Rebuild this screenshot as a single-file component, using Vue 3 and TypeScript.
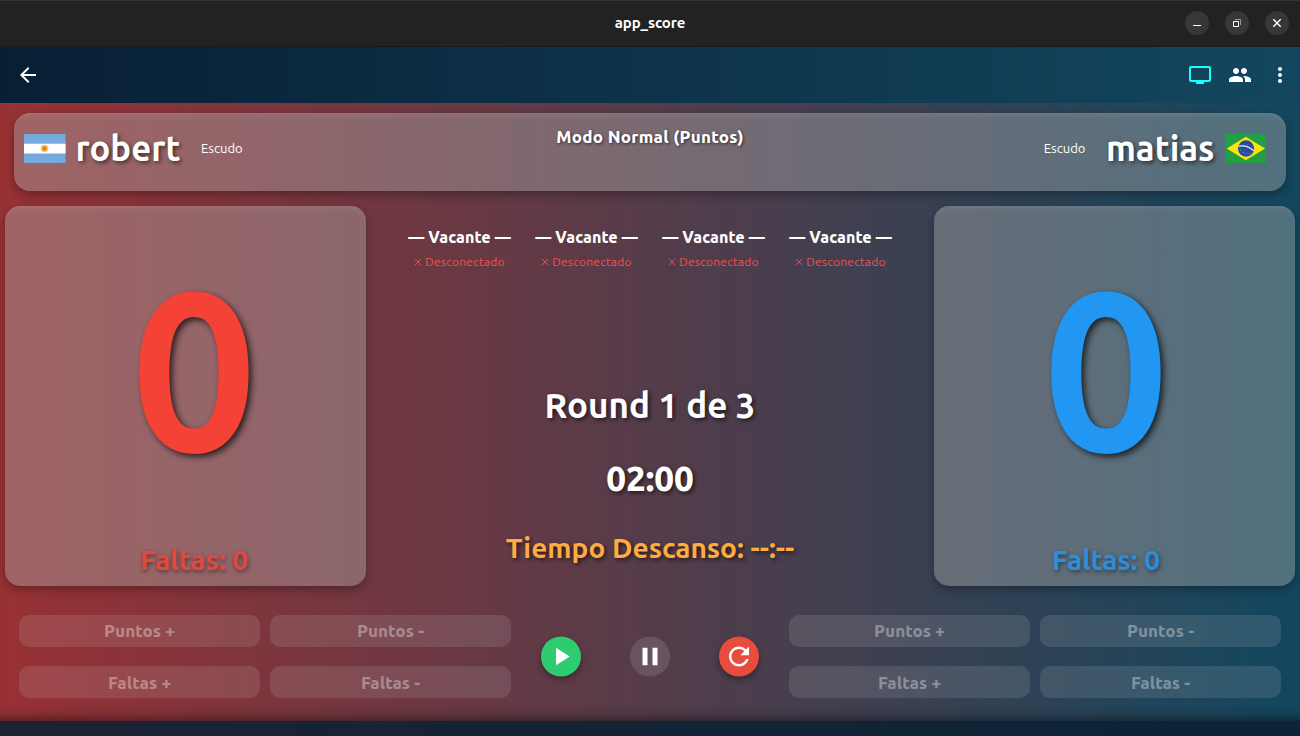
<script setup lang="ts">
interface Side {
  name: string
  score: number
  fouls: number
}

const left: Side = { name: 'robert', score: 0, fouls: 0 }
const right: Side = { name: 'matias', score: 0, fouls: 0 }
const judges: string[] = ['Vacante', 'Vacante', 'Vacante', 'Vacante']
const actions: string[] = ['Puntos +', 'Puntos -', 'Faltas +', 'Faltas -']
</script>

<template>
  <div class="window">
    <header class="titlebar">
      <span></span>
      <span class="app-title">app_score</span>
      <div class="controls">
        <span class="control"><svg viewBox="0 0 24 24"><path d="M8 14.5h8" stroke="#fff" /></svg></span>
        <span class="control">
          <svg viewBox="0 0 24 24" fill="none">
            <path d="M10 8.5h5.5v5.5" stroke="#999" />
            <path d="M8.5 10.5h5v5h-5z" stroke="#fff" />
          </svg>
        </span>
        <span class="control"><svg viewBox="0 0 24 24"><path d="M8.3 8.3l7.4 7.4M15.7 8.3l-7.4 7.4" stroke="#fff" stroke-width="1.4" /></svg></span>
      </div>
    </header>

    <nav class="appbar">
      <svg class="icon" viewBox="0 0 24 24"><path d="M20 11H7.83l5.59-5.59L12 4l-8 8 8 8 1.41-1.41L7.83 13H20v-2z" /></svg>
      <div class="appbar-actions">
        <svg class="icon cast" viewBox="0 0 24 24"><path d="M21 3H3c-1.1 0-2 .9-2 2v12c0 1.1.9 2 2 2h5v2h8v-2h5c1.1 0 2-.9 2-2V5c0-1.1-.9-2-2-2zm0 14H3V5h18v12z" /></svg>
        <svg class="icon" viewBox="0 0 24 24"><path d="M16 11c1.66 0 2.99-1.34 2.99-3S17.66 5 16 5s-3 1.34-3 3 1.34 3 3 3zm-8 0c1.66 0 2.99-1.34 2.99-3S9.66 5 8 5 5 6.34 5 8s1.34 3 3 3zm0 2c-2.33 0-7 1.17-7 3.5V19h14v-2.5c0-2.33-4.67-3.5-7-3.5zm8 0c-.29 0-.62.02-.97.05 1.16.84 1.97 1.97 1.97 3.45V19h6v-2.5c0-2.33-4.67-3.5-7-3.5z" /></svg>
        <svg class="icon" viewBox="0 0 24 24"><path d="M12 8c1.1 0 2-.9 2-2s-.9-2-2-2-2 .9-2 2 .9 2 2 2zm0 2c-1.1 0-2 .9-2 2s.9 2 2 2 2-.9 2-2-.9-2-2-2zm0 6c-1.1 0-2 .9-2 2s.9 2 2 2 2-.9 2-2-.9-2-2-2z" /></svg>
      </div>
    </nav>

    <main class="arena">
      <section class="players glass">
        <div class="player">
          <svg class="flag" viewBox="0 0 42 29" preserveAspectRatio="none">
            <rect width="42" height="29" fill="#75aadf" />
            <rect y="9.7" width="42" height="9.8" fill="#fff" />
            <circle cx="20.8" cy="14.5" r="4" fill="#e8b45a" opacity=".45" />
            <circle cx="20.8" cy="14.5" r="2.9" fill="#e3a02c" />
            <circle cx="20.8" cy="14.5" r="1.3" fill="#c9820f" />
          </svg>
          <span class="name robert">{{ left.name }}</span>
          <span class="crest">Escudo</span>
        </div>
        <h1 class="mode">Modo Normal (Puntos)</h1>
        <div class="player end">
          <span class="crest">Escudo</span>
          <span class="name matias">{{ right.name }}</span>
          <svg class="flag" viewBox="0 0 42 29" preserveAspectRatio="none">
            <rect width="42" height="29" fill="#229e45" />
            <path d="M1.7 14.5L21 2.8l19.6 11.7L21 26.2z" fill="#f8e509" />
            <circle cx="21.3" cy="14.5" r="8.2" fill="#2b49a3" />
            <path d="M13.6 12.2c5.5-1 11.5.8 15.5 4.6" fill="none" stroke="#dff0ee" stroke-width="1.3" />
            <g fill="#a9b8df">
              <circle cx="16" cy="16" r=".5" />
              <circle cx="18.5" cy="18.5" r=".5" />
              <circle cx="22" cy="19" r=".5" />
              <circle cx="25" cy="19.5" r=".5" />
              <circle cx="20" cy="16" r=".4" />
              <circle cx="23" cy="11" r=".4" />
            </g>
          </svg>
        </div>
      </section>

      <section class="board">
        <article class="card glass red">
          <span class="score">{{ left.score }}</span>
          <span class="fouls">Faltas: {{ left.fouls }}</span>
        </article>

        <div class="center">
          <ul class="judges">
            <li v-for="(judge, i) in judges" :key="i">
              <span class="judge">— {{ judge }} —</span>
              <span class="status">
                <svg viewBox="0 0 8 8"><path d="M1 1l6 6M7 1l-6 6" /></svg>
                <span>Desconectado</span>
              </span>
            </li>
          </ul>
          <p class="round">Round 1 de 3</p>
          <p class="clock">02:00</p>
          <p class="rest">Tiempo Descanso: --:--</p>
        </div>

        <article class="card glass blue">
          <span class="score">{{ right.score }}</span>
          <span class="fouls">Faltas: {{ right.fouls }}</span>
        </article>
      </section>

      <section class="panel">
        <div class="buttons">
          <button v-for="a in actions" :key="a" disabled>{{ a }}</button>
        </div>
        <div class="transport">
          <span class="round-btn play"><svg viewBox="0 0 24 24"><path d="M8 5v14l11-7z" /></svg></span>
          <span class="round-btn pause"><svg viewBox="0 0 24 24"><path d="M6 19h4V5H6v14zm8-14v14h4V5h-4z" /></svg></span>
          <span class="round-btn reset"><svg viewBox="0 0 24 24"><path d="M17.65 6.35C16.2 4.9 14.21 4 12 4c-4.42 0-7.99 3.58-7.99 8s3.57 8 7.99 8c3.73 0 6.84-2.55 7.73-6h-2.08c-.82 2.33-3.04 4-5.65 4-3.31 0-6-2.69-6-6s2.69-6 6-6c1.66 0 3.14.69 4.22 1.78L13 11h7V4l-2.35 2.35z" /></svg></span>
        </div>
        <div class="buttons">
          <button v-for="a in actions" :key="a" disabled>{{ a }}</button>
        </div>
      </section>
    </main>

    <footer class="bottombar"></footer>
  </div>
</template>

<style>
html,
body {
  margin: 0;
  overflow: hidden;
}
</style>

<style scoped>
.window {
  display: flex;
  flex-direction: column;
  width: 1300px;
  height: 736px;
  overflow: hidden;
  font-family: Ubuntu, "Noto Sans", "Open Sans", sans-serif;
  color: #fff;
  white-space: nowrap;
}
.titlebar {
  display: grid;
  grid-template-columns: 1fr auto 1fr;
  align-items: center;
  box-sizing: border-box;
  height: 47px;
  padding: 0 11px 1px;
  background: #222;
  border-top: 1px solid #333;
  border-bottom: 1px solid #1a1a1a;
}
.app-title {
  font-size: 15px;
  line-height: 20px;
  font-weight: 600;
  letter-spacing: -0.1px;
}
.controls {
  display: flex;
  justify-content: flex-end;
  gap: 16px;
}
.control {
  width: 24px;
  height: 24px;
  border-radius: 50%;
  background: #373737;
}
.control svg {
  display: block;
  width: 24px;
  height: 24px;
}
.appbar {
  display: flex;
  align-items: center;
  justify-content: space-between;
  box-sizing: border-box;
  height: 56px;
  padding: 0 8px 0 16px;
  background: linear-gradient(90deg, #081f34, #13475f);
}
.appbar-actions {
  display: flex;
  gap: 16px;
}
.icon {
  display: block;
  width: 24px;
  height: 24px;
  fill: #fff;
}
.cast {
  fill: #18ffff;
}
.arena {
  display: flex;
  flex-direction: column;
  flex: none;
  height: 618px;
  background: linear-gradient(90deg, #983134, #12475f);
}
.glass {
  background: rgba(176, 176, 176, 0.4);
  box-shadow: 0 4px 10px rgba(0, 0, 0, 0.3), inset 0 7px 7px -5px rgba(255, 255, 255, 0.1);
}
.players {
  display: grid;
  grid-template-columns: 1fr auto 1fr;
  box-sizing: border-box;
  height: 78px;
  margin: 10px 14px 0;
  padding: 0 20px 0 10px;
  border-radius: 16px;
}
.player {
  display: flex;
  align-items: center;
  height: 70px;
}
.end {
  justify-content: flex-end;
}
.flag {
  width: 41.5px;
  height: 29px;
}
.name {
  padding-top: 2px;
  font-size: 34.7px;
  line-height: 48px;
  font-weight: 700;
  text-shadow: 2px 2px 4px rgba(0, 0, 0, 0.55);
}
.robert {
  margin: 0 20.7px 0 10px;
}
.matias {
  margin: 0 10px 0 20.5px;
}
.crest {
  font-size: 13px;
}
.mode {
  margin: 12px 0 0 10px;
  font-size: 17px;
  line-height: 24px;
  font-weight: 800;
  letter-spacing: 0.25px;
  text-shadow: 1px 1px 3px rgba(0, 0, 0, 0.6);
}
.board {
  display: grid;
  grid-template-columns: 361px 1fr 361px;
  height: 380px;
  margin: 15px 5px 0;
}
.card {
  display: flex;
  flex-direction: column;
  align-items: center;
  box-sizing: border-box;
  border-radius: 15px;
}
.red {
  padding-left: 17px;
  color: #f44336;
}
.blue {
  padding-right: 17px;
  color: #2196f3;
}
.score {
  margin-top: 12px;
  font-size: 224px;
  line-height: 300px;
  font-weight: 700;
  text-shadow: 3px 3px 6px rgba(0, 0, 0, 0.7);
}
.fouls {
  margin-top: 22px;
  font-size: 28px;
  line-height: 40px;
  font-weight: 700;
  opacity: 0.8;
  text-shadow: 1px 2px 4px rgba(0, 0, 0, 0.55);
}
.center {
  display: flex;
  flex-direction: column;
  align-items: center;
}
.judges {
  display: grid;
  grid-template-columns: repeat(4, 127px);
  height: 64px;
  margin: 20px 0 0;
  padding: 0;
  list-style: none;
}
.judges li {
  display: flex;
  flex-direction: column;
  align-items: center;
}
.judge {
  font-size: 16px;
  line-height: 22px;
  font-weight: 800;
  letter-spacing: 0.12px;
}
.status {
  display: flex;
  align-items: center;
  gap: 3px;
  margin-top: 6px;
  font-size: 12px;
  line-height: 16px;
  letter-spacing: 0.22px;
  color: #ef5350;
}
.status svg {
  width: 8px;
  height: 8px;
  fill: none;
  stroke: currentColor;
  stroke-width: 0.9;
}
.round,
.clock,
.rest {
  margin: 0;
  text-shadow: 2px 2px 4px rgba(0, 0, 0, 0.6);
}
.round {
  margin-top: 91px;
  font-size: 35px;
  line-height: 48px;
  font-weight: 700;
}
.clock {
  margin-top: 25px;
  font-size: 35px;
  line-height: 48px;
  font-weight: 800;
}
.rest {
  margin-top: 26px;
  font-size: 28.1px;
  line-height: 40px;
  font-weight: 700;
  color: #ffab40;
}
.panel {
  display: flex;
  justify-content: space-between;
  height: 135px;
  padding: 29px 19px 0;
  box-sizing: border-box;
  background: linear-gradient(rgba(0, 0, 0, 0) 118px, rgba(0, 0, 0, 0.1) 128px, rgba(0, 0, 0, 0.35) 135px);
}
.buttons {
  display: grid;
  grid-template-columns: 241px 241px;
  grid-template-rows: 32px 32px;
  gap: 19px 10px;
}
.buttons button {
  padding: 0;
  border: 0;
  border-radius: 10px;
  background: rgba(225, 225, 225, 0.13);
  color: rgba(255, 255, 255, 0.34);
  font-family: inherit;
  font-size: 17px;
  line-height: 32px;
  font-weight: 800;
  letter-spacing: 0.05px;
}
.buttons button:nth-child(n + 3) {
  padding-top: 1px;
}
.transport {
  display: flex;
  gap: 49px;
  padding-top: 22px;
  transform: translateY(-0.5px);
}
.round-btn {
  display: flex;
  align-items: center;
  justify-content: center;
  width: 40px;
  height: 40px;
  border-radius: 50%;
}
.round-btn svg {
  width: 30px;
  height: 30px;
  fill: #fff;
}
.play {
  background: #2ecc71;
  box-shadow: 0 3px 6px rgba(0, 0, 0, 0.35);
}
.pause {
  background: rgba(255, 255, 255, 0.12);
}
.reset {
  background: #e74c3c;
  box-shadow: 0 3px 6px rgba(0, 0, 0, 0.35);
}
.bottombar {
  flex: 1;
  background: linear-gradient(90deg, #1c2234, #152434 35%, #0b2438);
}
</style>
